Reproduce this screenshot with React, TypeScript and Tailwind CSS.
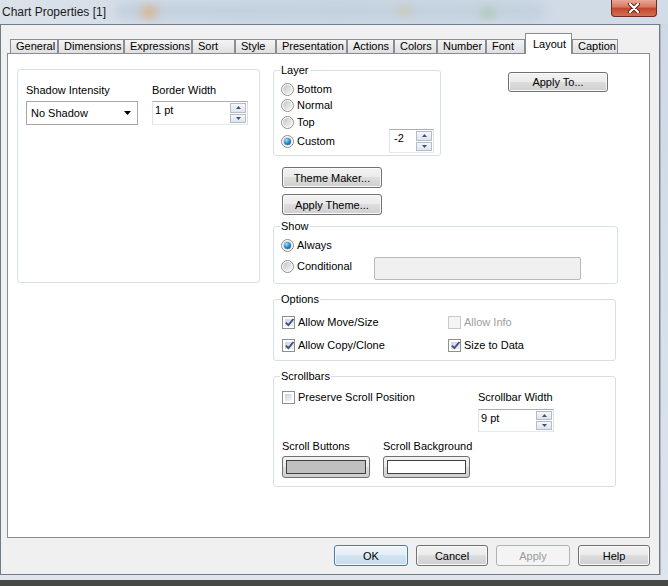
import React from 'react';

const tabs = [
  { label: 'General', w: 'w-[48px]' },
  { label: 'Dimensions', w: 'w-[66px]' },
  { label: 'Expressions', w: 'w-[68px]' },
  { label: 'Sort', w: 'w-[43px]' },
  { label: 'Style', w: 'w-[41px]' },
  { label: 'Presentation', w: 'w-[71px]' },
  { label: 'Actions', w: 'w-[47px]' },
  { label: 'Colors', w: 'w-[43px]' },
  { label: 'Number', w: 'w-[49px]' },
  { label: 'Font', w: 'w-[39px]' },
  { label: 'Layout', w: 'w-[47px]' },
  { label: 'Caption', w: 'w-[46px]' },
];

function Radio({ checked }: { checked?: boolean }) {
  return (
    <span className="w-[13px] h-[13px] rounded-full border border-[#8e8f8f] bg-white flex items-center justify-center shrink-0">
      <span className="w-[9px] h-[9px] rounded-full bg-linear-to-br from-[#c4c4c4] to-[#f6f6f6] flex items-center justify-center">
        {checked && (
          <span className="w-[7px] h-[7px] rounded-full bg-[radial-gradient(circle_at_35%_30%,#9be0ff,#1f7fc0_55%,#0c3e70)]" />
        )}
      </span>
    </span>
  );
}

function Check({ checked, disabled }: { checked?: boolean; disabled?: boolean }) {
  return (
    <span
      className={`w-[13px] h-[13px] border p-[2px] shrink-0 flex ${
        disabled ? 'border-[#c9c9c9] bg-[#f4f4f4]' : 'border-[#8e8f8f] bg-white'
      }`}
    >
      <span
        className={`flex-1 flex items-center justify-center ${
          disabled ? 'bg-[#f4f4f4]' : 'bg-linear-to-br from-[#cfd2db] to-[#f4f5f8]'
        }`}
      >
        {checked && (
          <svg width="9" height="9" viewBox="0 0 9 9" className="overflow-visible">
            <path d="M0.8 4.6 L3.4 7.2 L8.4 1" fill="none" stroke="#3e4f83" strokeWidth="1.9" />
          </svg>
        )}
      </span>
    </span>
  );
}

function Arrow({ up }: { up?: boolean }) {
  return (
    <svg width="5" height="3" viewBox="0 0 5 3">
      <path d={up ? 'M0 3 L2.5 0 L5 3Z' : 'M0 0 L2.5 3 L5 0Z'} fill="#3d5080" />
    </svg>
  );
}

function Spin({ value, className }: { value: string; className: string }) {
  return (
    <div className={`flex bg-white border border-[#abadb3] border-l-[#e2e3ea] border-r-[#dbdfe6] border-b-[#e3e9ef] ${className}`}>
      <span className="flex-1 pl-[2px] pt-[1px] leading-[15px]">{value}</span>
      <div className="flex flex-col gap-[1px] py-[1px] pr-[1px]">
        <span className="flex-1 w-[16px] border border-[#b5bcc7] bg-linear-to-b from-[#f5f7fa] to-[#dfe4eb] flex items-center justify-center">
          <Arrow up />
        </span>
        <span className="flex-1 w-[16px] border border-[#b5bcc7] bg-linear-to-b from-[#f5f7fa] to-[#dfe4eb] flex items-center justify-center">
          <Arrow />
        </span>
      </div>
    </div>
  );
}

function Btn({ children, className = '' }: { children: React.ReactNode; className?: string }) {
  return (
    <div
      className={`flex items-center justify-center rounded-[3px] border border-[#707070] bg-[linear-gradient(#f2f2f2,#ebebeb_49%,#dddddd_50%,#cfcfcf)] shadow-[inset_0_0_0_1px_#fbfbfb] ${className}`}
    >
      {children}
    </div>
  );
}

function Group({ label, className, children }: { label: string; className: string; children: React.ReactNode }) {
  return (
    <fieldset className={`border border-[#d5dfe5] rounded-[3px] ${className}`}>
      <legend className="ml-[6px] px-[1px] leading-[14px]">{label}</legend>
      {children}
    </fieldset>
  );
}

function Swatch({ color }: { color: string }) {
  return (
    <div className="h-[22px] rounded-[3px] border border-[#707070] bg-[linear-gradient(#f2f2f2,#ebebeb_49%,#dddddd_50%,#cfcfcf)] p-[3px] flex">
      <span className={`flex-1 border border-[#404040] ${color}`} />
    </div>
  );
}

export default function App() {
  return (
    <div className="w-[668px] h-[586px] overflow-hidden bg-[#474747] font-['Liberation_Sans',Arial,sans-serif] text-[11px] leading-[14px] text-black whitespace-nowrap select-none">
      <div className="w-[668px] h-[580px] flex flex-col bg-linear-to-b from-[#d4dde7] to-[#dfe6ee]">
        {/* title bar */}
        <div className="relative h-[24px] flex items-start overflow-hidden bg-linear-to-r from-[#dbe2ea] via-[#ccd8e4] to-[#d2dce6]">
          <span className="absolute left-[115px] top-[2px] w-[430px] h-[18px] rounded-full bg-[#c3d1df] blur-[5px]" />
          <span className="absolute left-[140px] top-[5px] w-[18px] h-[14px] rounded-full bg-[#d9b48a] opacity-80 blur-[4px]" />
          <span className="absolute left-[398px] top-[6px] w-[14px] h-[10px] rounded-full bg-[#cfcaa0] opacity-70 blur-[4px]" />
          <span className="absolute left-[480px] top-[8px] w-[16px] h-[10px] rounded-full bg-[#aac6a6] opacity-70 blur-[4px]" />
          <span className="relative pl-[2px] pt-[4px] text-[12px] leading-[16px] text-[#1b1b1b]">Chart Properties [1]</span>
          <div className="relative ml-auto mr-[11px] w-[46px] h-[17px] rounded-b-[4px] border border-t-0 border-[#6d2b22] bg-[linear-gradient(#eaa796,#d77763_45%,#c4432c_50%,#d36f52)] flex items-center justify-center">
            <svg width="14" height="10" viewBox="0 0 14 10">
              <path d="M3 1 L11 9 M11 1 L3 9" stroke="#5a1d14" strokeWidth="4" strokeLinecap="round" />
              <path d="M3 1 L11 9 M11 1 L3 9" stroke="#ffffff" strokeWidth="2.2" strokeLinecap="round" />
            </svg>
          </div>
        </div>

        <div className="flex">
          {/* client area */}
          <div className="w-[660px] h-[551px] border border-[#6f7b88] bg-[#f0f0f0] flex flex-col">
            {/* tabs */}
            <div className="flex items-end h-[20px] mt-[8px] ml-[9px]">
              {tabs.map((t) =>
                t.label === 'Layout' ? (
                  <div
                    key={t.label}
                    className={`relative z-10 h-[21px] -mb-[1px] border border-b-0 border-[#898c95] bg-white pl-[7px] pt-[3px] ${t.w}`}
                  >
                    {t.label}
                  </div>
                ) : (
                  <div
                    key={t.label}
                    className={`h-[14px] border border-b-0 border-[#898c95] bg-linear-to-b from-[#f4f4f4] to-[#dfdfdf] pl-[5px] leading-[13px] ${t.w}`}
                  >
                    {t.label}
                  </div>
                )
              )}
            </div>

            {/* tab page */}
            <div className="ml-[6px] w-[643px] h-[485px] border border-[#898c95] bg-white flex items-start">
              {/* left box */}
              <div className="ml-[9px] mt-[15px] w-[243px] h-[214px] border border-[#d5dfe5] rounded-[3px] flex gap-[14px] pl-[8px] pt-[12px]">
                <div className="w-[112px]">
                  <div className="h-[16px] leading-[16px]">Shadow Intensity</div>
                  <div className="mt-[3px] h-[24px] border border-[#a7a7a7] bg-white flex items-center justify-between pl-[4px] pr-[6px]">
                    <span>No Shadow</span>
                    <svg width="7" height="4" viewBox="0 0 7 4">
                      <path d="M0 0 L3.5 4 L7 0Z" fill="#000" />
                    </svg>
                  </div>
                </div>
                <div className="w-[96px]">
                  <div className="h-[16px] leading-[16px]">Border Width</div>
                  <Spin value="1 pt" className="mt-[3px] h-[24px]" />
                </div>
              </div>

              {/* right column */}
              <div className="ml-[13px] mt-[9px] w-[345px] flex flex-col">
                <div className="flex items-start">
                  <Group label="Layer" className="w-[168px] pb-[2px]">
                    <div className="mt-[4px] h-[16px] flex items-center gap-[3px] pl-[7px]">
                      <Radio /> Bottom
                    </div>
                    <div className="h-[16px] flex items-center gap-[3px] pl-[7px]">
                      <Radio /> Normal
                    </div>
                    <div className="mt-[1px] h-[16px] flex items-center gap-[3px] pl-[7px]">
                      <Radio /> Top
                    </div>
                    <div className="-mt-[1px] h-[24px] flex items-center justify-between pl-[7px] pr-[6px]">
                      <span className="flex items-center gap-[3px]">
                        <Radio checked /> Custom
                      </span>
                      <Spin value="-2" className="w-[45px] h-[24px] pl-[2px]" />
                    </div>
                  </Group>
                  <Btn className="ml-auto mr-[10px] mt-[9px] w-[100px] h-[20px]">Apply To...</Btn>
                </div>

                <Btn className="mt-[11px] ml-[9px] w-[100px] h-[21px]">Theme Maker...</Btn>
                <Btn className="mt-[6px] ml-[9px] w-[100px] h-[21px]">Apply Theme...</Btn>

                <Group label="Show" className="mt-[4px] w-[345px] pb-[3px]">
                  <div className="mt-[4px] h-[16px] flex items-center gap-[3px] pl-[7px]">
                    <Radio checked /> Always
                  </div>
                  <div className="mt-[4px] flex items-start pl-[7px]">
                    <div className="w-[93px] h-[18px] flex items-center gap-[3px]">
                      <Radio /> Conditional
                    </div>
                    <div className="w-[207px] h-[23px] border border-[#b9b9b9] rounded-[2px] bg-[#f0f0f0]" />
                  </div>
                </Group>

                <Group label="Options" className="mt-[8px] w-[343px] pb-[7px]">
                  <div className="mt-[8px] h-[16px] flex items-center pl-[8px]">
                    <div className="w-[166px] flex items-center gap-[3px]">
                      <Check checked /> Allow Move/Size
                    </div>
                    <div className="flex items-center gap-[3px] text-[#9d9d9d]">
                      <Check disabled /> Allow Info
                    </div>
                  </div>
                  <div className="mt-[7px] h-[16px] flex items-center pl-[8px]">
                    <div className="w-[166px] flex items-center gap-[3px]">
                      <Check checked /> Allow Copy/Clone
                    </div>
                    <div className="flex items-center gap-[3px]">
                      <Check checked /> Size to Data
                    </div>
                  </div>
                </Group>

                <Group label="Scrollbars" className="mt-[8px] w-[343px] pb-[8px]">
                  <div className="mt-[6px] flex items-start pl-[8px]">
                    <div className="w-[196px] h-[16px] flex items-center gap-[3px]">
                      <Check /> Preserve Scroll Position
                    </div>
                    <div className="w-[76px]">
                      <div className="h-[16px] leading-[17px]">Scrollbar Width</div>
                      <Spin value="9 pt" className="mt-[4px] h-[23px]" />
                    </div>
                  </div>
                  <div className="mt-[6px] flex gap-[13px] pl-[8px]">
                    <div className="w-[88px]">
                      <div className="h-[16px] leading-[16px]">Scroll Buttons</div>
                      <div className="mt-[2px]">
                        <Swatch color="bg-[#c0c0c0]" />
                      </div>
                    </div>
                    <div className="w-[87px]">
                      <div className="h-[16px] leading-[16px]">Scroll Background</div>
                      <div className="mt-[2px]">
                        <Swatch color="bg-white" />
                      </div>
                    </div>
                  </div>
                </Group>
              </div>
            </div>

            {/* dialog buttons */}
            <div className="mt-[7px] ml-[333px] flex gap-[8px]">
              <div className="w-[74px] h-[21px] flex items-center justify-center rounded-[3px] border border-[#3c7fb1] bg-[linear-gradient(#eef5fb,#e3eef8_49%,#d3e4f3_50%,#c6dbee)] shadow-[inset_0_0_0_1px_#f4f9fd]">
                OK
              </div>
              <Btn className="w-[72px] h-[21px]">Cancel</Btn>
              <div className="w-[74px] h-[21px] flex items-center justify-center rounded-[3px] border border-[#adb2b5] bg-[#f4f4f4] text-[#9a9a9a]">
                Apply
              </div>
              <Btn className="w-[72px] h-[21px]">Help</Btn>
            </div>
          </div>
          <div className="flex-1 border-l border-[#aab6c2] bg-linear-to-b from-[#cfd9e3] to-[#dde4ec]" />
        </div>
      </div>
    </div>
  );
}
